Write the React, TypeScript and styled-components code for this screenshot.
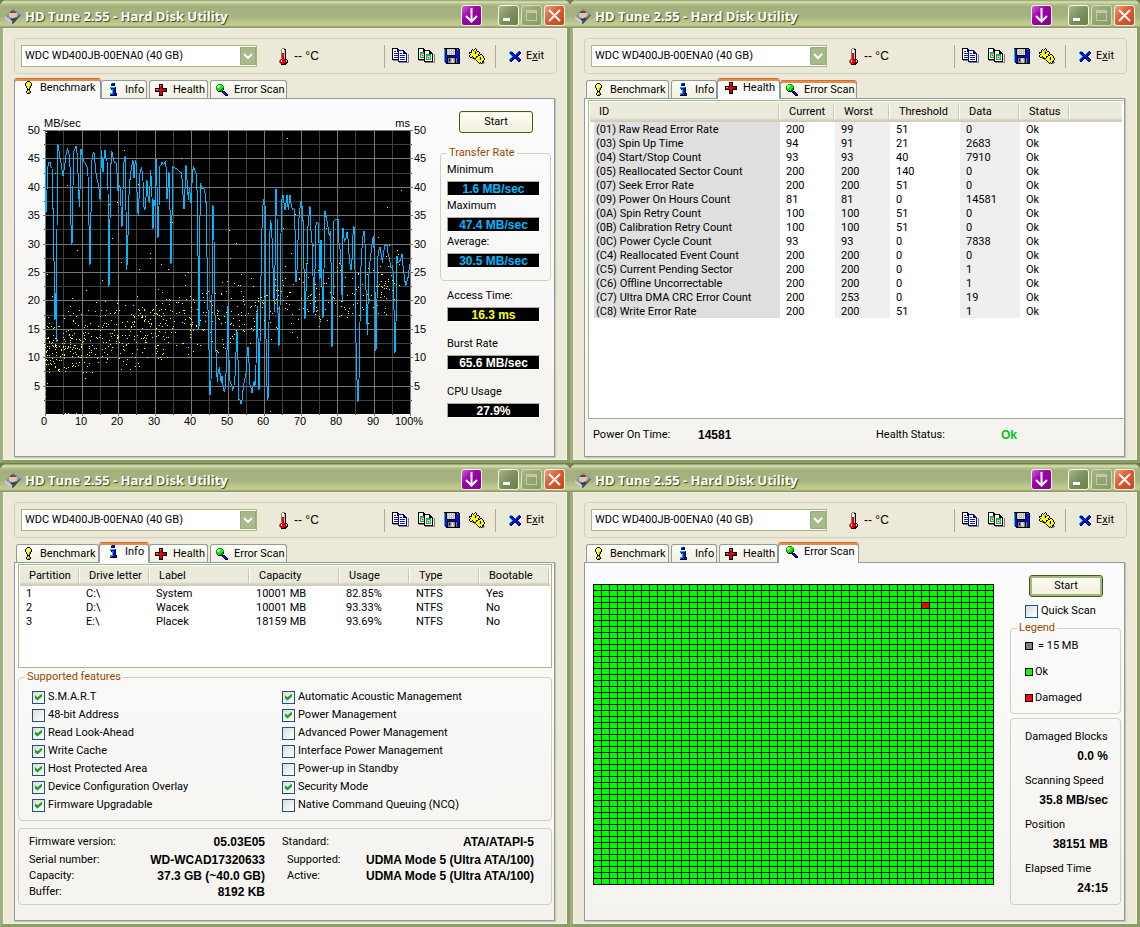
import React, { useId, useState } from "react";
import styled, { createGlobalStyle, css } from "styled-components";

const UI_FONT = `Roboto, "Liberation Sans", sans-serif`;
const BOLD_FONT = `"Liberation Sans", Arial, sans-serif`;
const TITLE_FONT = `"Open Sans", "Noto Sans", sans-serif`;

const GlobalStyle = createGlobalStyle`
  * { box-sizing: border-box; }
  body {
    margin: 0;
    background: #6d7f4c;
    color: #000;
    font: 11px/14px ${UI_FONT};
  }
  button, select, input { font: inherit; color: inherit; }
  fieldset { margin: 0; min-width: 0; }
`;

/* ---------- pixel icons ---------- */

const PALETTE: Record<string, string> = {
  k: "#000000",
  w: "#ffffff",
  y: "#ffff00",
  Y: "#a8a000",
  b: "#0010d0",
  c: "#00b8e8",
  r: "#e80000",
  R: "#900000",
  p: "#ff9090",
  g: "#00ff00",
  G: "#00a000",
  l: "#b0ffb0",
  n: "#000080",
  s: "#808080",
  e: "#c0c0c0",
};

function PixelIcon({ rows }: { rows: string[] }) {
  const width = rows[0].length;
  return (
    <svg width={width} height={rows.length} viewBox={`0 0 ${width} ${rows.length}`} shapeRendering="crispEdges" aria-hidden="true">
      {rows.flatMap((row, y) =>
        [...row].map((ch, x) =>
          ch === "." ? null : <rect key={`${x}-${y}`} x={x} y={y} width="1" height="1" fill={PALETTE[ch]} />
        )
      )}
    </svg>
  );
}

const BANG = [
  "..kkk..",
  ".kyyyk.",
  "kywyyyk",
  "kywyyyk",
  "kyyyyYk",
  ".kyyYk.",
  ".kyyYk.",
  "..kyk..",
  "..kkk..",
  "..kyk..",
  ".kyyYk.",
  ".kyYYk.",
  "..kkk..",
];

const INFO = [
  "..cbbk..",
  "..bbbk..",
  "..bbkk..",
  "........",
  ".ccccck.",
  ".cbbbbk.",
  "..kcbbk.",
  "...cbbk.",
  "...cbbk.",
  "...cbbk.",
  ".cccbbkk",
  ".cbbbbbk",
  ".kkkkkkk",
];

const CROSS = [
  "....kkkk....",
  "....kprk....",
  "....krrk....",
  "....krrk....",
  "kkkkkrrkkkkk",
  "kpprrrrrrrRk",
  "krrrrrrrrRRk",
  "kkkkkrrkkkkk",
  "....krrk....",
  "....krrk....",
  "....krRk....",
  "....kkkk....",
];

const LENS = [
  "..GGGG......",
  ".GllggG.....",
  "GlwwgggG....",
  "GlwggggG....",
  "GgggggGk....",
  "GggggGGk....",
  ".kgGGGk.....",
  "..kkkknbk...",
  "......nbbk..",
  ".......nbbk.",
  "........nbbk",
  ".........nnk",
];

const THERMO = [
  "...sss...",
  "..swwkk..",
  "..swwek..",
  "..swwek..",
  "..swwek..",
  "..srrek..",
  "..srrek..",
  "..srrek..",
  "..srrek..",
  "..srrek..",
  "..srrek..",
  ".srrrrkk.",
  "srwrrrrek",
  "srwrrrRek",
  "srrrrrRkk",
  ".srrRRkk.",
  "..kkkkk..",
];

const EXIT = [
  ".cc......cb.",
  "cbbk....cbbk",
  "cbbbk..cbbbk",
  ".cbbbkcbbbk.",
  "..cbbbbbbk..",
  "...cbbbbk...",
  "..cbbbbbbk..",
  ".cbbbkbbbbk.",
  "cbbbk..bbbbk",
  "cbbk....bbbk",
  ".bk......bk.",
];

const GEARS = [
  "......k.........",
  "...k.kyk........",
  "..kykyyk........",
  "..kyyesykk......",
  "kkkyyeksyyk.....",
  "kyyyyekyyyk.....",
  ".kyyyyyyyk.kk...",
  "kyyyyyyyykkyyk..",
  "kyykyyykkyyyyyk.",
  ".kkskyykyyykyyk.",
  "...skkkyyyekyyyk",
  ".....ssyyyekyyyk",
  ".......kyyyyyyk.",
  "........kyyyykk.",
  ".........kykykss",
  "..........kskss.",
];

const FLOPPY = [
  "kkkkkkkkkkkkkkk.",
  "cbkeeeeeeeekbcbk",
  "cbkewewewewkbbbk",
  "cbkeeeeeeeekbbbk",
  "cbkewewewewkbbbk",
  "cbkeeeeeeeekbbbk",
  "cbkewewewewkbbbk",
  "cbbkkkkkkkkbbbbk",
  "cbbbbbbbbbbbbbbk",
  "cbbkkkkkkkkkbbbk",
  "cbbkssseeesksbbk",
  "cbbksksewesksbbk",
  "cbbksksewesksbbk",
  "cbbksssewesksbbk",
  ".bbkssseeesksbbk",
  "..kkkkkkkkkkkkkk",
];

function CopyIcon({ image }: { image?: boolean }) {
  const page = (x: number, y: number, edge: string) => (
    <g transform={`translate(${x} ${y})`}>
      <path d="M1 12h9V4h1v9H1z" fill="#808080" />
      <path d="M0 0h6v1h1v1h1v1h1v9H0z" fill={edge} />
      <path d="M1 1h4v3h3v7H1z" fill="#fff" />
      {image ? (
        <>
          <rect x="2" y="4" width="5" height="6" fill="#00a0c0" />
          <rect x="3" y="5" width="4" height="4" fill="#00d040" />
          <rect x="3" y="6" width="3" height="3" fill="#ffe000" />
          <rect x="4" y="7" width="1" height="1" fill="#e00000" />
        </>
      ) : (
        <path d="M2 3h2v1H2zM2 5h5v1H2zM2 7h5v1H2zM2 9h5v1H2z" fill="#0020d0" />
      )}
    </g>
  );
  return (
    <svg width="17" height="16" viewBox="0 0 17 16" shapeRendering="crispEdges" aria-hidden="true">
      {page(0, 0, "#000")}
      {page(6, 2, image ? "#000" : "#000080")}
    </svg>
  );
}

function AppIcon() {
  return (
    <svg width="16" height="16" viewBox="0 0 16 16" aria-hidden="true">
      <path d="M9 1 16 7 8 16 0 10z" fill="#3c4658" />
      <path d="M8 0 16 6 7 14 0 8z" fill="#8f9aa8" />
      <path d="M0 8 7 13 7 16 0 11z" fill="#c4ccd8" />
      <ellipse cx="8" cy="6" rx="4" ry="4" fill="#e6c4ac" />
      <path d="M4 5q3-5 8-1l-2 1z" fill="#5a4a48" />
      <path d="M5 10q3 2 6-1l-1 3-3 1z" fill="#2c3440" />
    </svg>
  );
}

/* ---------- window chrome ---------- */

const Desktop = styled.main`
  display: grid;
  grid-template-columns: repeat(2, minmax(0, 1fr));
  row-gap: 1px;
`;

const Frame = styled.section`
  display: flex;
  flex-direction: column;
  overflow: hidden;
  border-radius: 7px 7px 0 0;
  background: #ece9d8;
`;

const TitleBar = styled.header`
  display: flex;
  align-items: center;
  height: 28px;
  padding: 3px 5px 0 5px;
  background: linear-gradient(#8c9c64 0, #dbe3b8 2px, #b4c08a 4px, #a3b07e 7px, #a6b280 16px, #bcc78c 22px, #c4cd92 25px, #98a570 27px, #7f8e58 28px);
`;

const Title = styled.h1`
  flex: 1;
  margin: 0 0 0 4px;
  color: #fff;
  font: 700 13px/18px ${TITLE_FONT};
  white-space: nowrap;
  text-shadow: 1px 1px 1px #3a4420;
`;

const TONES = {
  purple: "linear-gradient(135deg, #d060d8, #a000a8 40%, #800088)",
  olive: "linear-gradient(135deg, #a8b888, #7d9060 50%, #6b7f4c)",
  faded: "linear-gradient(135deg, #a8b888, #93a575 50%, #889a68)",
  red: "linear-gradient(135deg, #f0a080, #e06038 40%, #c84018)",
};

const ChromeButton = styled.button<{ $tone: keyof typeof TONES; $apart?: boolean }>`
  display: grid;
  place-items: center;
  width: 21px;
  height: 21px;
  margin: 0 ${(p) => (p.$apart ? 16 : 2)}px 0 0;
  padding: 0;
  border: 1px solid ${(p) => (p.$tone === "faded" ? "#d4dcb8" : "#f4f6e8")};
  border-radius: 3px;
  background: ${(p) => TONES[p.$tone]};
  &:last-child { margin-right: 0; }
`;

const Body = styled.div`
  flex: 1;
  display: flex;
  flex-direction: column;
  padding: 10px 10px 3px 11px;
  border: 3px solid #a0b07c;
  border-top: 0;
  border-right-color: #8c9c68;
  border-bottom-color: #8c9c68;
  box-shadow: inset 0 0 0 1px #f2f0e2;
`;

const Toolbar = styled.div`
  display: flex;
  align-items: center;
  height: 36px;
  padding: 0 12px 0 6px;
  border: 1px solid #d0d0bf;
  border-radius: 4px;
`;

const DriveBox = styled.div`
  position: relative;
  width: 236px;
  height: 22px;
`;

const DriveSelect = styled.select`
  appearance: none;
  width: 100%;
  height: 100%;
  padding: 0 20px 0 3px;
  border: 1px solid #a4b97f;
  border-radius: 0;
  background: #fff;
`;

const DriveArrow = styled.svg`
  position: absolute;
  top: 2px;
  right: 1px;
  pointer-events: none;
`;

const Temperature = styled.div`
  display: flex;
  align-items: center;
  gap: 6px;
  margin-left: 22px;
  font: 12px/14px ${BOLD_FONT};
`;

const Tools = styled.div`
  display: flex;
  align-items: center;
  gap: 9px;
  height: 23px;
  margin-left: auto;
  padding: 0 10px 0 7px;
  border: solid #aca899;
  border-width: 0 1px;
`;

const ToolButton = styled.button`
  display: flex;
  align-items: center;
  gap: 5px;
  padding: 0;
  border: 0;
  background: none;
`;

const ExitButton = styled(ToolButton)`
  margin-left: 13px;
`;

const TabRow = styled.div`
  display: flex;
  align-items: flex-end;
  gap: 2px;
  height: 20px;
  margin-top: 4px;
  padding-left: 2px;
`;

const tabActive = css`
  z-index: 1;
  height: 21px;
  margin: 0 -2px -1px;
  padding: 0 3px 3px 5px;
  border-top-color: transparent;
  background: #fcfcfe;
`;

const tabAccent = css`
  box-shadow: inset 0 2px 0 #e68b4c;
  border-top-color: #d8702c;
`;

const Tab = styled.button<{ $active: boolean; $hot: boolean; $width: number }>`
  position: relative;
  display: flex;
  align-items: center;
  gap: 4px;
  min-width: ${(p) => p.$width + (p.$active ? 4 : 0)}px;
  height: 18px;
  padding: 0 1px 0 3px;
  border: 1px solid #919b9c;
  border-bottom: 0;
  border-radius: 3px 3px 0 0;
  background: linear-gradient(#fffff8, #f1efe0);
  white-space: nowrap;
  ${(p) => p.$active && tabActive}
  ${(p) => (p.$active || p.$hot) && tabAccent}
`;

const TabIcon = styled.span`
  display: grid;
  place-items: center;
  width: 16px;
`;

const Panel = styled.div`
  min-height: 359px;
  margin-right: 2px;
  border: 1px solid #919b9c;
  background: linear-gradient(#fcfcfe, #f4f3ee);
  box-shadow: 1px 1px 1px #c8c6b6;
`;

/* ---------- shared controls ---------- */

const Group = styled.fieldset`
  padding: 0;
  border: 1px solid #d0d0bf;
  border-radius: 4px;
`;

const GroupTitle = styled.legend`
  height: 14px;
  margin-left: 6px;
  padding: 0 2px;
  color: #974a00;
`;

const PushButton = styled.button<{ $focus?: boolean }>`
  width: 74px;
  height: 22px;
  padding: 0;
  border: 1px solid #376206;
  border-radius: 3px;
  background: linear-gradient(#fffff6, #f2eedc);
  box-shadow: inset 0 0 0 ${(p) => (p.$focus ? "2px #a4b97f" : "1px #f6f3e2")};
`;

const CheckLabel = styled.label`
  display: flex;
  align-items: center;
  gap: 3px;
  height: 18px;
`;

const CheckInput = styled.input`
  appearance: none;
  display: grid;
  place-items: center;
  width: 13px;
  height: 13px;
  margin: 0;
  border: 1px solid #1c5180;
  background: linear-gradient(135deg, #dcdcd7, #fff);
  &:checked::after {
    content: "";
    width: 7px;
    height: 7px;
    background: #21a121;
    clip-path: polygon(0 25%, 35% 55%, 100% 0, 100% 42%, 35% 100%, 0 72%);
  }
`;

const Strong = styled.strong`
  display: block;
  font: 700 12px/14px ${BOLD_FONT};
`;

/* ---------- benchmark ---------- */

const BenchLayout = styled.div`
  display: flex;
  justify-content: space-between;
  padding-right: 3px;
`;

const BenchSide = styled.div`
  display: flex;
  flex-direction: column;
  width: 111px;
  padding-top: 12px;
`;

const BenchStart = styled(PushButton)`
  margin: 0 0 13px 19px;
`;

const RateList = styled.div`
  display: grid;
  gap: 3px;
  padding: 3px 6px 12px;
`;

const OtherReadings = styled.div`
  display: grid;
  gap: 15px;
  padding: 8px 7px 0;
`;

const ReadingBox = styled.div`
  display: grid;
  gap: 4px;
`;

const Lcd = styled.output<{ $color: string }>`
  width: 93px;
  height: 15px;
  border: 1px solid;
  border-color: #aca899 #fff #fff #aca899;
  background: #000;
  color: ${(p) => p.$color};
  font: 700 12px/14px ${BOLD_FONT};
  text-align: center;
`;

function Reading({ label, value, color }: { label: string; value: string; color: string }) {
  return (
    <ReadingBox>
      <span>{label}</span>
      <Lcd $color={color}>{value}</Lcd>
    </ReadingBox>
  );
}

const TRACE = `137,145 139,308 141,268 142,240 144,180 146,157 152,157 154,172 157,176 159,240 161,350 164,500 166,630 168,550 170,697
172,370 173,103 176,110 179,130 182,150 185,165 187,182 190,198 193,182 196,160 200,130 204,118 207,125 210,150 212,190 214,345
217,406 220,230 223,125 226,118 229,110 232,130 234,160 236,220 239,292 241,240 243,180 244,118 248,140 252,155 258,164 262,172
265,200 268,345 271,466 273,380 275,240 277,150 280,133 283,128 286,160 289,190 293,213 297,225 300,260 302,275 304,180 305,122
308,150 310,187 313,145 316,122 319,145 322,155 325,240 326,440 328,532 331,330 333,200 335,127 338,130 341,148 346,160 349,158
352,190 355,243 358,225 361,232 364,290 367,352 370,240 372,160 374,152 377,138 379,300 381,482 384,432 387,275 390,220 393,190
397,165 400,152 403,205 407,150 409,160 411,200 413,290 416,320 419,245 421,190 426,172 430,215 432,290 436,300 440,250 442,212
445,260 449,280 453,182 456,230 460,358 463,270 466,290 469,148 472,230 475,385 478,290 481,170 484,165 487,157 491,165 497,157
500,180 502,268 505,235 508,188 511,300 514,463 517,320 520,172 527,175 534,180 540,187 546,190 549,240 553,298 556,240 559,167
562,210 566,270 569,235 572,255 574,280 578,200 581,170 586,185 591,193 594,330 596,540 598,658 600,430 602,220 607,238 613,237
617,255 620,290 623,510 625,600 628,720 631,856 634,815 637,560 640,287 643,390 645,580 648,680 650,770 653,818 655,790 659,773
662,800 665,820 667,798 670,825 674,848 677,835 680,770 683,700 685,590 688,750 691,815 695,825 699,840 703,828 707,790 710,700
712,665 715,750 718,870 721,870 724,883 728,868 731,830 735,812 739,790 742,740 745,712 748,760 751,825 754,835 757,850 760,830
764,815 766,828 769,770 770,655 773,590 776,730 778,840 781,700 783,575 785,430 788,320 791,268 793,275 796,281 798,560 800,810
803,840 805,870 808,640 810,400 812,330 816,350 819,450 822,520 824,608 827,400 829,238 832,320 834,600 837,625 838,710 841,590
844,370 847,268 850,256 853,280 856,302 859,280 862,256 866,302 871,256 874,280 878,300 883,295 886,360 889,517 893,470 896,355
899,310 902,290 904,275 908,295 911,350 914,540 916,628 919,545 922,460 925,350 928,320 931,290 934,365 937,400 940,500 943,610
946,480 949,345 952,337 955,340 958,400 961,508 964,390 967,530 970,625 973,480 976,305 980,325 984,345 989,380 992,365 995,500
997,712 1000,560 1003,335 1008,328 1015,328 1018,400 1023,430 1026,530 1028,578 1030,355 1034,395 1039,385 1042,368 1046,395
1049,450 1054,480 1058,440 1060,375 1063,350 1066,480 1068,600 1070,790 1073,820 1075,877 1078,810 1081,640 1083,490 1086,430
1089,385 1093,365 1096,400 1099,540 1103,677 1106,540 1109,470 1114,430 1118,395 1121,380 1124,430 1127,600 1129,724 1132,570
1135,440 1138,420 1141,412 1145,435 1148,460 1152,425 1156,406 1162,406 1165,430 1170,450 1174,475 1178,470 1181,490 1183,600
1186,730 1189,640 1192,440 1195,460 1200,455 1204,445 1207,432 1210,470 1214,500 1218,530 1222,515 1226,500 1228,480 1231,462`;

const STRAY_DOTS: [number, number][] = [
  [1, 2], [14, 0], [79, 20], [136, 28], [10, 43], [22, 55], [64, 74], [72, 72], [93, 54], [151, 47], [11, 102], [127, 92],
  [32, 120], [67, 108], [76, 132], [105, 123], [105, 128], [94, 139], [116, 134], [123, 139], [2, 144], [57, 150], [41, 160],
  [140, 145], [143, 142], [140, 155], [113, 159], [117, 162], [7, 166], [27, 168], [162, 114], [184, 100], [185, 128], [191, 113],
  [196, 144], [177, 152], [242, 8], [356, 60], [342, 77], [333, 107], [344, 115], [353, 124], [246, 123], [250, 84], [238, 98],
  [253, 95], [268, 115], [281, 98], [292, 137], [316, 121], [0, 260], [0, 266], [20, 283], [23, 283], [31, 283], [225, 281],
];

/* Access-time cloud: rises slowly with the position, densest near the outer tracks. */
function accessDots(count: number) {
  let seed = 20255;
  const next = () => {
    seed = (seed * 1103515245 + 12345) % 2147483648;
    return seed / 2147483648;
  };
  const dots: [number, number][] = [];
  for (let i = 0; i < count; i += 1) {
    const t = Math.pow(next(), 1.4) * 0.97;
    const ms = 4.5 + 12 * t + ((next() + next()) / 2) * 14;
    dots.push([Math.round(t * 365), Math.round(284 - ms * 5.68)]);
  }
  return dots;
}

const DOTS = [...accessDots(760), ...STRAY_DOTS].map(([x, y]) => `M${x} ${y}h1v1h-1z`).join("");

const ChartText = styled.text`
  font: 11px ${BOLD_FONT};
`;

function SpeedChart() {
  const left = 30;
  const top = 31;
  const w = 366;
  const h = 284;
  const ticks = Array.from({ length: 21 }, (_, i) => i);
  const px = (i: number) => Math.round(left + (i * (w - 1)) / 20);
  const py = (i: number) => Math.round(top + h - (i * h) / 20);
  return (
    <svg width="420" height="332" viewBox="0 0 420 332" role="img" aria-label="Transfer rate and access time by disk position">
      <g shapeRendering="crispEdges">
        <rect x={left} y={top} width={w} height={h} fill="#000" />
        {[1, 0].map((odd) => (
          <g key={odd} fill={odd ? "#404040" : "#787878"}>
            {ticks.filter((i) => i % 2 === odd).map((i) => (
              <React.Fragment key={i}>
                <rect x={px(i)} y={top} width="1" height={h + 2 - odd} />
                {i > 0 && <rect x={left - 2 + odd} y={py(i)} width={w + 4 - odd * 2} height="1" />}
              </React.Fragment>
            ))}
          </g>
        ))}
        <path d={DOTS} transform={`translate(${left} ${top})`} fill="#ffff00" />
        <svg x={left} y={top} width={w} height={h} viewBox="136 61 1098 852">
          <polyline points={TRACE} fill="none" stroke="#00b8ff" strokeWidth="3" />
        </svg>
      </g>
      <ChartText x="29" y="28">MB/sec</ChartText>
      <ChartText x="395" y="28" textAnchor="end">ms</ChartText>
      {ticks.filter((i) => i % 2 === 0 && i > 0).map((i) => (
        <React.Fragment key={i}>
          <ChartText x="25" y={py(i) + 4} textAnchor="end">{i * 2.5}</ChartText>
          <ChartText x="399" y={py(i) + 4}>{i * 2.5}</ChartText>
        </React.Fragment>
      ))}
      {ticks.filter((i) => i % 2 === 0).map((i) => (
        <ChartText key={i} x={px(i) - 1} y="326" textAnchor="middle">{i === 20 ? "100%" : i * 5}</ChartText>
      ))}
    </svg>
  );
}

function Benchmark() {
  return (
    <BenchLayout>
      <SpeedChart />
      <BenchSide>
        <BenchStart type="button">Start</BenchStart>
        <Group>
          <GroupTitle>Transfer Rate</GroupTitle>
          <RateList>
            <Reading label="Minimum" value="1.6 MB/sec" color="#00b8ff" />
            <Reading label="Maximum" value="47.4 MB/sec" color="#00b8ff" />
            <Reading label="Average:" value="30.5 MB/sec" color="#00b8ff" />
          </RateList>
        </Group>
        <OtherReadings>
          <Reading label="Access Time:" value="16.3 ms" color="#ffff00" />
          <Reading label="Burst Rate" value="65.6 MB/sec" color="#ffffff" />
          <Reading label="CPU Usage" value="27.9%" color="#ffffff" />
        </OtherReadings>
      </BenchSide>
    </BenchLayout>
  );
}

/* ---------- list tables ---------- */

const ListBox = styled.div<{ $height: number; $flush?: boolean }>`
  height: ${(p) => p.$height}px;
  margin: 1px ${(p) => (p.$flush ? 0 : 2)}px 0 3px;
  border: 1px solid #a4b97f;
  ${(p) => p.$flush && "border-right-color: #fff; border-bottom-color: #aca899;"}
  padding: 1px;
  background: #fff;
`;

const HeadFill = styled.div`
  background: linear-gradient(#ebeadb 0 16px, #dedbca 17px, #cbc7b8 20px, #fff 20px);
`;

const Table = styled.table`
  table-layout: fixed;
  border-collapse: collapse;
`;

const Th = styled.th`
  height: 20px;
  padding: 0 0 0 9px;
  font-weight: 400;
  text-align: left;
  background: linear-gradient(#c7c5b2, #c7c5b2) right 1px top 3px / 1px 14px no-repeat,
    linear-gradient(#fff, #fff) right 0 top 3px / 1px 14px no-repeat;
`;

const Td = styled.td<{ $shade?: string }>`
  height: 14px;
  padding: 2px 0 0 6px;
  line-height: 12px;
  background: ${(p) => p.$shade || "transparent"};
  white-space: nowrap;
  ${(p) => p.$shade === "#dfdfdf" && "background: linear-gradient(90deg, #fff 4px, #dfdfdf 4px);"}
`;

interface ListProps {
  columns: [string, number][];
  rows: string[][];
  shades?: string[];
}

function ListTable({ columns, rows, shades = [] }: ListProps) {
  const width = columns.reduce((sum, [, w]) => sum + w, 0);
  return (
    <HeadFill>
      <Table width={width}>
        <colgroup>
          {columns.map(([name, w]) => <col key={name} width={w} />)}
        </colgroup>
        <thead>
          <tr>{columns.map(([name]) => <Th key={name} scope="col">{name}</Th>)}</tr>
        </thead>
        <tbody>
          {rows.map((row) => (
            <tr key={row[0]}>
              {row.map((cell, i) => <Td key={i} $shade={shades[i]}>{cell}</Td>)}
            </tr>
          ))}
        </tbody>
      </Table>
    </HeadFill>
  );
}

/* ---------- health ---------- */

const HEALTH_COLUMNS: [string, number][] = [
  ["ID", 190], ["Current", 55], ["Worst", 55], ["Threshold", 70], ["Data", 60], ["Status", 50],
];

const HEALTH_ROWS = [
  ["(01) Raw Read Error Rate", "200", "99", "51", "0", "Ok"],
  ["(03) Spin Up Time", "94", "91", "21", "2683", "Ok"],
  ["(04) Start/Stop Count", "93", "93", "40", "7910", "Ok"],
  ["(05) Reallocated Sector Count", "200", "200", "140", "0", "Ok"],
  ["(07) Seek Error Rate", "200", "200", "51", "0", "Ok"],
  ["(09) Power On Hours Count", "81", "81", "0", "14581", "Ok"],
  ["(0A) Spin Retry Count", "100", "100", "51", "0", "Ok"],
  ["(0B) Calibration Retry Count", "100", "100", "51", "0", "Ok"],
  ["(0C) Power Cycle Count", "93", "93", "0", "7838", "Ok"],
  ["(C4) Reallocated Event Count", "200", "200", "0", "0", "Ok"],
  ["(C5) Current Pending Sector", "200", "200", "0", "1", "Ok"],
  ["(C6) Offline Uncorrectable", "200", "200", "0", "1", "Ok"],
  ["(C7) Ultra DMA CRC Error Count", "200", "253", "0", "19", "Ok"],
  ["(C8) Write Error Rate", "200", "200", "51", "1", "Ok"],
];

const HealthFooter = styled.div`
  display: grid;
  grid-template-columns: 105px 178px 125px 1fr;
  padding: 9px 0 0 8px;
`;

const Good = styled(Strong)`
  color: #00c814;
`;

function Health() {
  return (
    <>
      <ListBox $height={319} $flush>
        <ListTable columns={HEALTH_COLUMNS} rows={HEALTH_ROWS} shades={["#dfdfdf", "", "#efefef", "", "#efefef", ""]} />
      </ListBox>
      <HealthFooter>
        <span>Power On Time:</span>
        <Strong>14581</Strong>
        <span>Health Status:</span>
        <Good>Ok</Good>
      </HealthFooter>
    </>
  );
}

/* ---------- info ---------- */

const PARTITION_COLUMNS: [string, number][] = [
  ["Partition", 60], ["Drive letter", 70], ["Label", 100], ["Capacity", 90], ["Usage", 70], ["Type", 70], ["Bootable", 70],
];

const PARTITION_ROWS = [
  ["1", "C:\\", "System", "10001 MB", "82.85%", "NTFS", "Yes"],
  ["2", "D:\\", "Wacek", "10001 MB", "93.33%", "NTFS", "No"],
  ["3", "E:\\", "Placek", "18159 MB", "93.69%", "NTFS", "No"],
];

const FEATURES: [string, boolean][] = [
  ["S.M.A.R.T", true],
  ["48-bit Address", false],
  ["Read Look-Ahead", true],
  ["Write Cache", true],
  ["Host Protected Area", true],
  ["Device Configuration Overlay", true],
  ["Firmware Upgradable", true],
  ["Automatic Acoustic Management", true],
  ["Power Management", true],
  ["Advanced Power Management", false],
  ["Interface Power Management", false],
  ["Power-up in Standby", false],
  ["Security Mode", true],
  ["Native Command Queuing (NCQ)", false],
];

const FeatureGroup = styled(Group)`
  margin: 2px 2px 0 3px;
`;

const FeatureGrid = styled.div`
  display: grid;
  grid-template: repeat(7, 18px) / 250px 1fr;
  grid-auto-flow: column;
  padding: 4px 13px 6px;
`;

const DriveFacts = styled.div`
  display: grid;
  grid-template-columns: 236px 252px;
  column-gap: 17px;
  height: 77px;
  margin: 7px 2px 0 3px;
  padding: 6px 0 0 10px;
  border: 1px solid #d0d0bf;
  border-radius: 4px;
`;

const FactList = styled.dl`
  margin: 0;
`;

const Fact = styled.div<{ $indent?: boolean }>`
  display: flex;
  justify-content: space-between;
  height: 16px;
  padding-left: ${(p) => (p.$indent ? 5 : 0)}px;
  &:first-child { height: 18px; }
  dd { margin: 0; }
`;

function Info() {
  return (
    <>
      <ListBox $height={104}>
        <ListTable columns={PARTITION_COLUMNS} rows={PARTITION_ROWS} />
      </ListBox>
      <FeatureGroup>
        <GroupTitle>Supported features</GroupTitle>
        <FeatureGrid>
          {FEATURES.map(([name, on]) => (
            <CheckLabel key={name}>
              <CheckInput type="checkbox" defaultChecked={on} />
              {name}
            </CheckLabel>
          ))}
        </FeatureGrid>
      </FeatureGroup>
      <DriveFacts>
        <FactList>
          <Fact><dt>Firmware version:</dt><dd><Strong>05.03E05</Strong></dd></Fact>
          <Fact><dt>Serial number:</dt><dd><Strong>WD-WCAD17320633</Strong></dd></Fact>
          <Fact><dt>Capacity:</dt><dd><Strong>37.3 GB (~40.0 GB)</Strong></dd></Fact>
          <Fact><dt>Buffer:</dt><dd><Strong>8192 KB</Strong></dd></Fact>
        </FactList>
        <FactList>
          <Fact><dt>Standard:</dt><dd><Strong>ATA/ATAPI-5</Strong></dd></Fact>
          <Fact $indent><dt>Supported:</dt><dd><Strong>UDMA Mode 5 (Ultra ATA/100)</Strong></dd></Fact>
          <Fact $indent><dt>Active:</dt><dd><Strong>UDMA Mode 5 (Ultra ATA/100)</Strong></dd></Fact>
        </FactList>
      </DriveFacts>
    </>
  );
}

/* ---------- error scan ---------- */

const ScanLayout = styled.div`
  display: flex;
  justify-content: space-between;
  align-items: flex-start;
  padding: 12px 3px 0 8px;
`;

const BlockMap = styled.svg`
  margin-top: 9px;
`;

const ScanSide = styled.div`
  width: 111px;
  white-space: nowrap;
`;

const ScanStart = styled(PushButton)`
  display: block;
  margin-left: 19px;
`;

const QuickScan = styled(CheckLabel)`
  margin: 5px 0 1px 15px;
`;

const LegendList = styled.div`
  display: grid;
  gap: 12px;
  padding: 4px 0 8px 14px;
`;

const LegendItem = styled.div<{ $wide?: boolean }>`
  display: flex;
  align-items: center;
  gap: ${(p) => (p.$wide ? 5 : 2)}px;
`;

const Swatch = styled.i<{ $color: string }>`
  width: 8px;
  height: 8px;
  border: 1px solid #000;
  background: ${(p) => p.$color};
`;

const Stats = styled.dl`
  display: grid;
  gap: 5px;
  height: 187px;
  margin: 4px 0 0;
  padding: 11px 12px 0 14px;
  border: 1px solid #d0d0bf;
  border-radius: 4px;
  align-content: start;
  dd { margin: 0 0 6px; text-align: right; }
`;

function ErrorScan() {
  const cellId = useId();
  return (
    <ScanLayout>
      <BlockMap width="401" height="301" viewBox="0 0 401 301" shapeRendering="crispEdges" role="img" aria-label="Scanned blocks">
        <defs>
          <pattern id={cellId} width="8" height="6" patternUnits="userSpaceOnUse">
            <rect width="8" height="6" fill="#000" />
            <rect x="1" y="1" width="7" height="5" fill="#00ff00" />
          </pattern>
        </defs>
        <rect width="401" height="301" fill={`url(#${cellId})`} />
        <path d="M400 0h1v301H0v-1h400z" fill="#000" />
        <rect x="329" y="19" width="7" height="5" fill="#ff0000" />
      </BlockMap>
      <ScanSide>
        <ScanStart type="button" $focus>Start</ScanStart>
        <QuickScan>
          <CheckInput type="checkbox" />
          Quick Scan
        </QuickScan>
        <Group>
          <GroupTitle>Legend</GroupTitle>
          <LegendList>
            <LegendItem $wide><Swatch $color="#808080" />= 15 MB</LegendItem>
            <LegendItem><Swatch $color="#00ff00" />Ok</LegendItem>
            <LegendItem><Swatch $color="#ff0000" />Damaged</LegendItem>
          </LegendList>
        </Group>
        <Stats>
          <dt>Damaged Blocks</dt>
          <dd><Strong>0.0 %</Strong></dd>
          <dt>Scanning Speed</dt>
          <dd><Strong>35.8 MB/sec</Strong></dd>
          <dt>Position</dt>
          <dd><Strong>38151 MB</Strong></dd>
          <dt>Elapsed Time</dt>
          <dd><Strong>24:15</Strong></dd>
        </Stats>
      </ScanSide>
    </ScanLayout>
  );
}

/* ---------- the utility window ---------- */

const TABS = [
  { name: "Benchmark", icon: BANG, view: Benchmark, width: 83 },
  { name: "Info", icon: INFO, view: Info, width: 46 },
  { name: "Health", icon: CROSS, view: Health, width: 59 },
  { name: "Error Scan", icon: LENS, view: ErrorScan, width: 77 },
];

function HdTune({ initialTab, hotTab = -1 }: { initialTab: number; hotTab?: number }) {
  const [tab, setTab] = useState(initialTab);
  const View = TABS[tab].view;
  return (
    <Frame>
      <TitleBar>
        <AppIcon />
        <Title>HD Tune 2.55 - Hard Disk Utility</Title>
        <ChromeButton type="button" $tone="purple" $apart aria-label="Send to tray">
          <svg width="13" height="15" viewBox="0 0 13 15" fill="none" stroke="#fff" strokeWidth="2">
            <path d="M6.500 0V13M1 8l5.500 5.500L12 8" />
          </svg>
        </ChromeButton>
        <ChromeButton type="button" $tone="olive" aria-label="Minimize">
          <svg width="13" height="13" viewBox="0 0 13 13"><path d="M1 9h7v3H1z" fill="#fff" /></svg>
        </ChromeButton>
        <ChromeButton type="button" $tone="faded" aria-label="Maximize">
          <svg width="13" height="13" viewBox="0 0 13 13"><path d="M1 1h11v11H1zM2 4v7h9V4z" fillRule="evenodd" fill="#c0cca0" /></svg>
        </ChromeButton>
        <ChromeButton type="button" $tone="red" aria-label="Close">
          <svg width="13" height="13" viewBox="0 0 13 13"><path d="M1 1 12 12M12 1 1 12" stroke="#fff" strokeWidth="2" /></svg>
        </ChromeButton>
      </TitleBar>
      <Body>
        <Toolbar>
          <DriveBox>
            <DriveSelect aria-label="Drive">
              <option>WDC WD400JB-00ENA0 (40 GB)</option>
            </DriveSelect>
            <DriveArrow width="16" height="18" viewBox="0 0 16 18" aria-hidden="true">
              <rect width="16" height="18" rx="1" fill="#98a97a" />
              <rect x="1" y="1" width="14" height="16" rx="1" fill="#a9b98c" />
              <path d="M4 7l4 4 4-4" fill="none" stroke="#fff" strokeWidth="2" />
            </DriveArrow>
          </DriveBox>
          <Temperature>
            <PixelIcon rows={THERMO} />
            -- °C
          </Temperature>
          <Tools>
            <ToolButton type="button" aria-label="Copy text"><CopyIcon /></ToolButton>
            <ToolButton type="button" aria-label="Copy screenshot"><CopyIcon image /></ToolButton>
            <ToolButton type="button" aria-label="Save"><PixelIcon rows={FLOPPY} /></ToolButton>
            <ToolButton type="button" aria-label="Options"><PixelIcon rows={GEARS} /></ToolButton>
          </Tools>
          <ExitButton type="button">
            <PixelIcon rows={EXIT} />
            <span>E<u>x</u>it</span>
          </ExitButton>
        </Toolbar>
        <TabRow role="tablist">
          {TABS.map(({ name, icon, width }, i) => (
            <Tab
              key={name}
              type="button"
              role="tab"
              aria-selected={i === tab}
              $active={i === tab}
              $hot={i === hotTab}
              $width={width}
              onClick={() => setTab(i)}
            >
              <TabIcon><PixelIcon rows={icon} /></TabIcon>
              {name}
            </Tab>
          ))}
        </TabRow>
        <Panel role="tabpanel">
          <View />
        </Panel>
      </Body>
    </Frame>
  );
}

export default function App() {
  return (
    <>
      <GlobalStyle />
      <Desktop>
        <HdTune initialTab={0} />
        <HdTune initialTab={2} hotTab={3} />
        <HdTune initialTab={1} />
        <HdTune initialTab={3} />
      </Desktop>
    </>
  );
}
